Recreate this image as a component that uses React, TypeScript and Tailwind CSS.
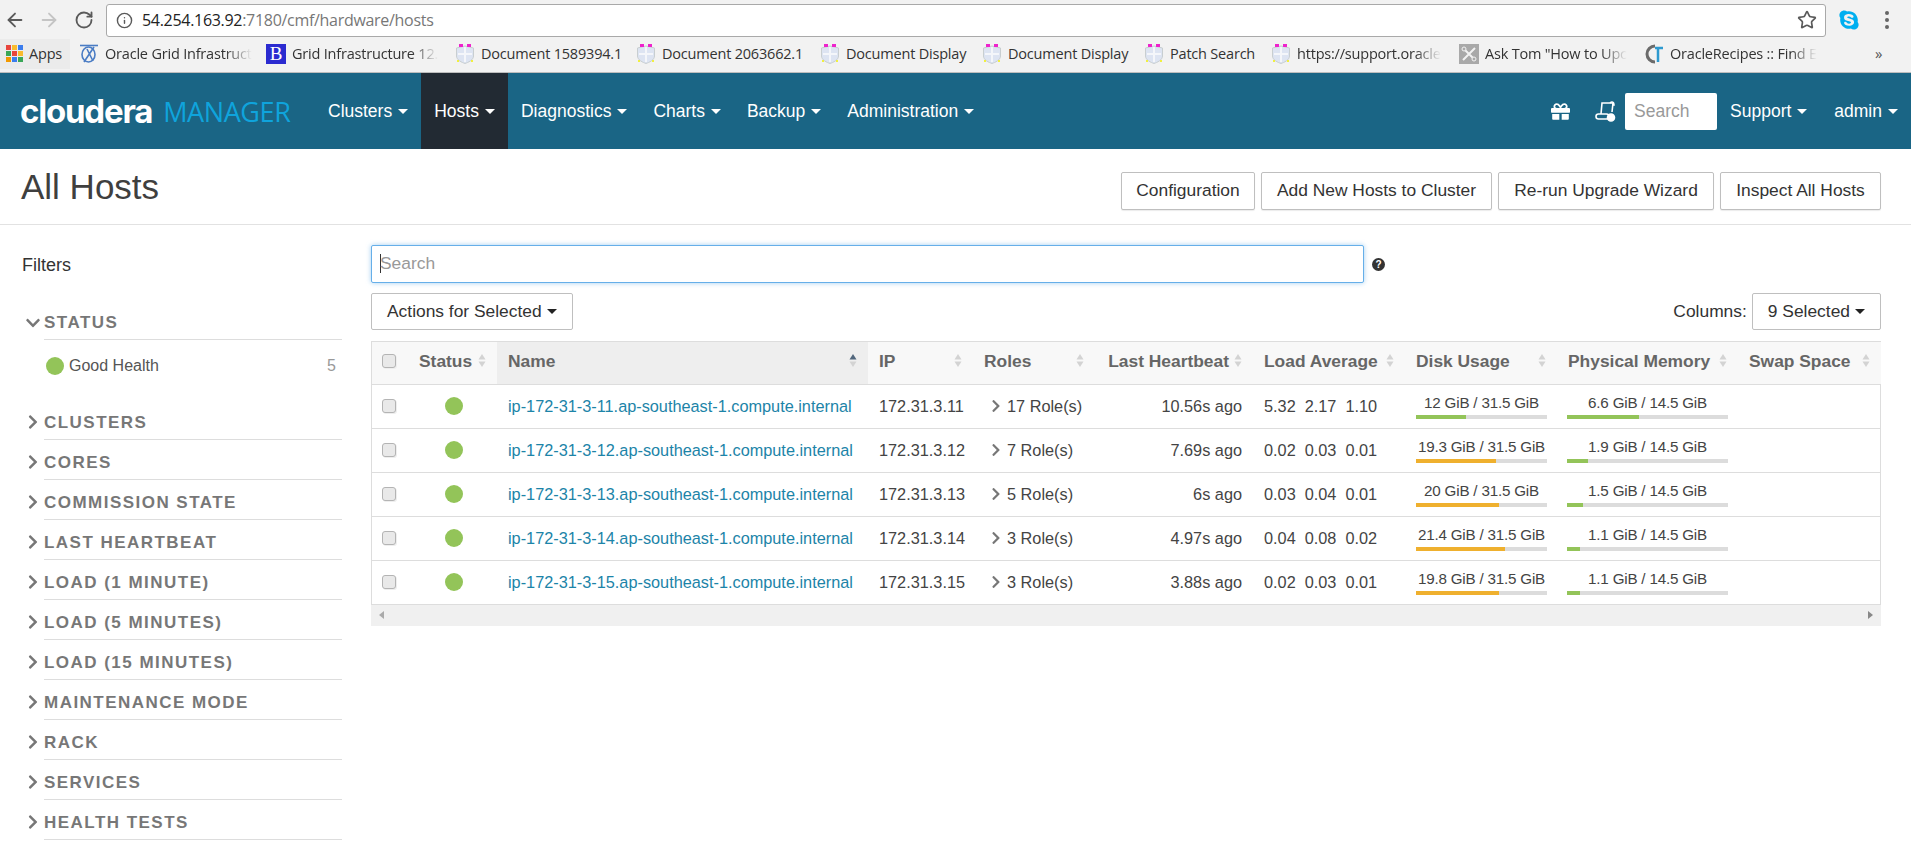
import { ArrowLeft, ArrowRight, Info, RotateCw, Star } from "lucide-react";
import { FaChevronDown, FaChevronRight, FaGift, FaSkype } from "react-icons/fa";

const APP_COLORS = [
  "bg-[#e8453c]", "bg-[#f9bb2d]", "bg-[#3b7ded]",
  "bg-[#3aa757]", "bg-[#e8453c]", "bg-[#f9bb2d]",
  "bg-[#f29900]", "bg-[#3b7ded]", "bg-[#3aa757]",
];

const BOOKMARKS = [
  { kind: "oracle", label: "Oracle Grid Infrastruct", width: "w-[187px]", fade: true },
  { kind: "b", label: "Grid Infrastructure 12.", width: "w-[189px]", fade: true },
  { kind: "shield", label: "Document 1589394.1", width: "w-[181px]", fade: false },
  { kind: "shield", label: "Document 2063662.1", width: "w-[184px]", fade: false },
  { kind: "shield", label: "Document Display", width: "w-[162px]", fade: false },
  { kind: "shield", label: "Document Display", width: "w-[162px]", fade: false },
  { kind: "shield", label: "Patch Search", width: "w-[127px]", fade: false },
  { kind: "shield", label: "https://support.oracle", width: "w-[188px]", fade: true },
  { kind: "cross", label: 'Ask Tom "How to Upc', width: "w-[185px]", fade: true },
  { kind: "recipes", label: "OracleRecipes :: Find E", width: "w-[215px]", fade: true },
];

const NAV_ITEMS = ["Clusters", "Hosts", "Diagnostics", "Charts", "Backup", "Administration"];

const PAGE_ACTIONS = [
  { label: "Configuration", width: "w-[134px]" },
  { label: "Add New Hosts to Cluster", width: "w-[231px]" },
  { label: "Re-run Upgrade Wizard", width: "w-[216px]" },
  { label: "Inspect All Hosts", width: "w-[161px]" },
];

const FILTERS = [
  "CLUSTERS",
  "CORES",
  "COMMISSION STATE",
  "LAST HEARTBEAT",
  "LOAD (1 MINUTE)",
  "LOAD (5 MINUTES)",
  "LOAD (15 MINUTES)",
  "MAINTENANCE MODE",
  "RACK",
  "SERVICES",
  "HEALTH TESTS",
];

const HOSTS = [
  { id: 11, roles: 17, beat: "10.56s ago", load: ["5.32", "2.17", "1.10"], disk: "12 GiB / 31.5 GiB", diskPct: 38, mem: "6.6 GiB / 14.5 GiB", memPct: 45 },
  { id: 12, roles: 7, beat: "7.69s ago", load: ["0.02", "0.03", "0.01"], disk: "19.3 GiB / 31.5 GiB", diskPct: 61, mem: "1.9 GiB / 14.5 GiB", memPct: 13 },
  { id: 13, roles: 5, beat: "6s ago", load: ["0.03", "0.04", "0.01"], disk: "20 GiB / 31.5 GiB", diskPct: 63, mem: "1.5 GiB / 14.5 GiB", memPct: 10 },
  { id: 14, roles: 3, beat: "4.97s ago", load: ["0.04", "0.08", "0.02"], disk: "21.4 GiB / 31.5 GiB", diskPct: 68, mem: "1.1 GiB / 14.5 GiB", memPct: 8 },
  { id: 15, roles: 3, beat: "3.88s ago", load: ["0.02", "0.03", "0.01"], disk: "19.8 GiB / 31.5 GiB", diskPct: 63, mem: "1.1 GiB / 14.5 GiB", memPct: 8 },
];

function Caret({ className }: { className: string }) {
  return <span className={`inline-block h-0 w-0 border-x-[5px] border-t-[5px] border-x-transparent ${className}`} />;
}

function SortIcon({ active = false }: { active?: boolean }) {
  return (
    <svg width="8" height="15" viewBox="0 0 8 15" className="shrink-0">
      <path d="M4 1 L7.5 6.5 H0.5 Z" fill={active ? "#52677d" : "#d3d3d3"} />
      <path d="M4 14 L7.5 8.5 H0.5 Z" fill="#d3d3d3" />
    </svg>
  );
}

function Favicon({ kind }: { kind: string }) {
  if (kind === "b") {
    return (
      <span className="flex h-[20px] w-[20px] shrink-0 items-center justify-center bg-[#2b2bd0] font-['Liberation_Serif',serif] text-[19px] leading-none text-white">
        B
      </span>
    );
  }
  return (
    <svg width="20" height="20" viewBox="0 0 20 20" className="shrink-0">
      {kind === "oracle" ? (
        <g fill="none" stroke="#4a7cc4" strokeWidth="1.6">
          <path d="M1 1.5 H19" />
          <ellipse cx="9.5" cy="10.5" rx="6.5" ry="7.5" />
          <path d="M5 18 L15 3 M8 5 L14 17" />
        </g>
      ) : null}
      {kind === "shield" ? (
        <g>
          <path d="M1.5 4 L10 2 L18.5 4 V12 C18.5 16 13 18.5 10 19.5 C7 18.5 1.5 16 1.5 12 Z" fill="#dde4f2" stroke="#c8ced0" />
          <path d="M10 3 V18 M3 10 H17" stroke="#f4f6fa" strokeWidth="2" />
          <rect x="4" y="0" width="4" height="3" fill="#ee22cc" />
          <rect x="12" y="0" width="4" height="3" fill="#ee22cc" />
          <rect x="2" y="16" width="2" height="2" fill="#f0f040" />
          <rect x="16" y="16" width="2" height="2" fill="#f0f040" />
        </g>
      ) : null}
      {kind === "cross" ? (
        <g>
          <rect x="0" y="0" width="20" height="20" fill="#a9a9a9" />
          <path d="M4 4 L16 16 M16 4 L4 16" stroke="#f2f2f2" strokeWidth="2" />
          <circle cx="5" cy="5" r="2" fill="#a9a9a9" stroke="#f2f2f2" />
          <circle cx="15" cy="15" r="2" fill="#a9a9a9" stroke="#f2f2f2" />
        </g>
      ) : null}
      {kind === "recipes" ? (
        <g fill="none">
          <path d="M11 2 A8 8 0 1 0 11 18" stroke="#6b6b6b" strokeWidth="3" />
          <path d="M11 4 H19 M14 4 V18" stroke="#2e9ad0" strokeWidth="2.5" />
        </g>
      ) : null}
    </svg>
  );
}

function Checkbox() {
  return <span className="block h-[14px] w-[14px] rounded-[3px] border border-[#b4b4b4] bg-[#e9e9e9] shadow-[1px_1px_0_#eeeeee]" />;
}

function HeaderCell({
  label,
  width,
  active = false,
  right = false,
}: {
  label: string;
  width: string;
  active?: boolean;
  right?: boolean;
}) {
  return (
    <th className={`${width} h-[42px] border-b border-[#dddddd] px-[11px] pb-[4px] font-bold ${active ? "bg-[#eeeeee]" : ""}`}>
      <div className={`flex items-center gap-[5px] ${right ? "justify-end" : "justify-between"}`}>
        <span className="whitespace-nowrap">{label}</span>
        <SortIcon active={active} />
      </div>
    </th>
  );
}

function UsageBar({ label, percent, color }: { label: string; percent: number; color: string }) {
  return (
    <div className="w-full">
      <div className="text-center text-[15.2px] leading-[18px] tracking-[-0.2px] whitespace-nowrap">{label}</div>
      <div className="mt-[3px] h-[4px] w-full bg-[#dcdcdc]">
        <div className={`h-full ${color}`} style={{ width: `${percent}%` }} />
      </div>
    </div>
  );
}

export default function App() {
  return (
    <div className="h-[854px] w-[1911px] overflow-hidden bg-white font-['Liberation_Sans',Arial,sans-serif] text-[17.4px] text-[#333333]">
      {/* browser toolbar */}
      <div className="flex h-[38px] items-center bg-[#f2f2f2] pt-[2px]">
        <div className="flex w-[106px] items-center pl-[4px] text-[#5a5a5a]">
          <ArrowLeft size={22} strokeWidth={2} />
          <ArrowRight size={22} strokeWidth={2} className="ml-[12px] text-[#c4c4c4]" />
          <RotateCw size={20} strokeWidth={2.2} className="ml-[14px]" />
        </div>
        <div className="flex h-[33px] w-[1720px] items-center rounded-[3px] border border-[#a9a9a9] bg-white pr-[8px] pl-[9px]">
          <Info size={17} strokeWidth={2} className="text-[#5a5a5a]" />
          <span className="ml-[9px] font-['Open_Sans',sans-serif] text-[16px] tracking-[-0.3px] text-[#222222]">54.254.163.92</span>
          <span className="font-['Open_Sans',sans-serif] text-[16px] tracking-[-0.3px] text-[#777777]">:7180/cmf/hardware/hosts</span>
          <Star size={20} strokeWidth={2} className="ml-auto text-[#5a5a5a]" />
        </div>
        <FaSkype size={22} className="ml-[12px] text-[#00aff0]" />
        <div className="ml-[25px] flex flex-col gap-[3px]">
          <span className="h-[4px] w-[4px] rounded-full bg-[#666666]" />
          <span className="h-[4px] w-[4px] rounded-full bg-[#666666]" />
          <span className="h-[4px] w-[4px] rounded-full bg-[#666666]" />
        </div>
      </div>

      {/* bookmarks bar */}
      <div className="flex h-[35px] items-center border-b border-[#bdbdbd] bg-[#f2f2f2] pb-[3px] font-['Open_Sans',sans-serif] text-[14.5px] tracking-[-0.2px] text-[#333333]">
        <div className="flex h-[30px] w-[70px] items-center bg-[#ebebeb] pl-[6px]">
          <div className="grid grid-cols-3 gap-[1px]">
            {APP_COLORS.map((color, index) => (
              <span className={`h-[5px] w-[5px] ${color}`} key={index} />
            ))}
          </div>
          <span className="ml-[6px]">Apps</span>
        </div>
        <div className="ml-[9px] flex">
          {BOOKMARKS.map((bookmark, index) => (
            <div className={`flex items-center gap-[6px] ${bookmark.width}`} key={index}>
              <Favicon kind={bookmark.kind} />
              <span
                className={`whitespace-nowrap ${
                  bookmark.fade ? "[mask-image:linear-gradient(to_right,black_82%,transparent)]" : ""
                }`}
              >
                {bookmark.label}
              </span>
            </div>
          ))}
        </div>
        <span className="ml-[16px] text-[15px] text-[#555555]">»</span>
      </div>

      {/* manager nav */}
      <nav className="flex h-[76px] items-stretch bg-[#1a6585] text-[17.5px] text-white">
        <div className="flex w-[315px] items-center pl-[20px]">
          <span className="font-['Inter',sans-serif] text-[33px] leading-none font-bold tracking-[-1.2px]">cloudera</span>
          <span className="ml-[11px] font-['Open_Sans',sans-serif] text-[27px] leading-none font-normal tracking-[-0.4px] text-[#0fa4dc]">MANAGER</span>
        </div>
        {NAV_ITEMS.map((item) => (
          <div className={`flex items-center gap-[6px] px-[13px] ${item === "Hosts" ? "bg-[#222a33]" : ""}`} key={item}>
            <span>{item}</span>
            <Caret className="border-t-white" />
          </div>
        ))}
        <div className="ml-auto flex items-center pr-[13px]">
          <FaGift size={19} />
          <svg width="22" height="22" viewBox="0 0 22 22" className="ml-[24px]" fill="none" stroke="white" strokeWidth="1.6">
            <path d="M7 14 L8 3 H19 L18 12" />
            <path d="M16 3 C18 1 20 2 20 5 H18" />
            <rect x="2" y="14" width="13" height="5" rx="2.5" />
            <circle cx="17" cy="17.5" r="3.5" fill="white" />
          </svg>
          <div className="ml-[9px] flex h-[37px] w-[92px] items-center rounded-[2px] bg-white pl-[9px] text-[#999999]">Search</div>
          <span className="ml-[13px]">Support</span>
          <Caret className="ml-[6px] border-t-white" />
          <span className="ml-[27px]">admin</span>
          <Caret className="ml-[6px] border-t-white" />
        </div>
      </nav>

      {/* page title */}
      <div className="flex h-[76px] items-center border-b border-[#e2e2e2] pr-[30px] pl-[21px]">
        <h1 className="text-[35px] leading-none text-[#3f3f3f]">All Hosts</h1>
        <div className="mt-[8px] ml-auto flex gap-[6px]">
          {PAGE_ACTIONS.map((action) => (
            <button
              className={`h-[38px] rounded-[2px] border border-[#bfbfbf] bg-white whitespace-nowrap text-[#333333] shadow-[0_1px_1px_rgba(0,0,0,0.08)] ${action.width}`}
              key={action.label}
            >
              {action.label}
            </button>
          ))}
        </div>
      </div>

      <div className="flex">
        {/* filters */}
        <aside className="w-[371px] shrink-0 pt-[28px] pl-[22px]">
          <h2 className="text-[18px] leading-[24px] text-[#333333]">Filters</h2>
          <div className="mt-[30px] ml-[3px] flex h-[32px] items-center">
            <span className="flex w-[19px] shrink-0 items-center text-[#777777]">
              <FaChevronDown size={16} />
            </span>
            <span className="text-[17px] font-bold tracking-[1.47px] text-[#777777]">STATUS</span>
          </div>
          <div className="ml-[22px] w-[298px] border-t border-[#dddddd]" />
          <div className="mt-[14px] ml-[24px] flex w-[290px] items-center text-[16px] text-[#555555]">
            <span className="h-[18px] w-[18px] rounded-full bg-[#93c459]" />
            <span className="ml-[5px]">Good Health</span>
            <span className="ml-auto text-[#999999]">5</span>
          </div>
          <div className="mt-[22px]">
            {FILTERS.map((filter) => (
              <div className="ml-[3px] flex h-[40px] items-center" key={filter}>
                <span className="flex w-[19px] shrink-0 items-center pt-[4px] text-[#777777]">
                  <FaChevronRight size={16} />
                </span>
                <div className="flex h-full w-[298px] items-center border-b border-[#dddddd] pt-[6px] text-[17px] font-bold tracking-[1.47px] whitespace-nowrap text-[#777777]">
                  {filter}
                </div>
              </div>
            ))}
          </div>
        </aside>

        {/* hosts */}
        <main className="w-[1510px] shrink-0 pt-[20px]">
          <div className="flex items-center">
            <div className="flex h-[38px] w-[993px] items-center rounded-[2px] border border-[#66afe9] bg-white pb-[2px] pl-[8px] text-[#999999] shadow-[0_0_5px_rgba(102,175,233,0.6)]">
              <span className="mr-[-1px] h-[19px] w-px bg-[#333333]" />
              Search
            </div>
            <span className="ml-[8px] flex h-[13px] w-[13px] items-center justify-center rounded-full bg-[#333333] text-[10px] font-bold text-white">?</span>
          </div>
          <div className="mt-[10px] flex items-center">
            <button className="flex h-[37px] items-center gap-[5px] rounded-[2px] border border-[#bfbfbf] bg-white px-[15px] whitespace-nowrap">
              Actions for Selected
              <Caret className="border-t-[#222222]" />
            </button>
            <span className="ml-auto">Columns:</span>
            <button className="ml-[5px] flex h-[37px] items-center gap-[5px] rounded-[2px] border border-[#bfbfbf] bg-white px-[15px] whitespace-nowrap">
              9 Selected
              <Caret className="border-t-[#222222]" />
            </button>
          </div>

          <div className="mt-[11px] border-x border-t border-[#dddddd]">
            <table className="w-full table-fixed border-collapse text-left">
              <thead className="bg-[#f8f8f8] text-[#666666]">
                <tr>
                  <th className="h-[42px] w-[36px] border-b border-[#dddddd] pb-[4px] pl-[10px]">
                    <Checkbox />
                  </th>
                  <HeaderCell label="Status" width="w-[89px]" />
                  <HeaderCell label="Name" width="w-[371px]" active />
                  <HeaderCell label="IP" width="w-[105px]" />
                  <HeaderCell label="Roles" width="w-[122px]" />
                  <HeaderCell label="Last Heartbeat" width="w-[158px]" right />
                  <HeaderCell label="Load Average" width="w-[152px]" />
                  <HeaderCell label="Disk Usage" width="w-[152px]" />
                  <HeaderCell label="Physical Memory" width="w-[181px]" />
                  <HeaderCell label="Swap Space" width="w-[143px]" />
                </tr>
              </thead>
              <tbody className="text-[16.3px] text-[#444444]">
                {HOSTS.map((host) => (
                  <tr className="h-[44px] border-b border-[#dddddd]" key={host.id}>
                    <td className="pl-[10px]">
                      <Checkbox />
                    </td>
                    <td>
                      <span className="mx-auto block h-[18px] w-[18px] translate-x-[1px] rounded-full bg-[#93c459]" />
                    </td>
                    <td className="px-[11px] whitespace-nowrap text-[#1c84a8]">ip-172-31-3-{host.id}.ap-southeast-1.compute.internal</td>
                    <td className="px-[11px]">172.31.3.{host.id}</td>
                    <td className="pr-[11px] pl-[16px]">
                      <div className="flex items-center">
                        <span className="flex w-[18px] shrink-0 items-center text-[#777777]">
                          <FaChevronRight size={14} />
                        </span>
                        {host.roles} Role(s)
                      </div>
                    </td>
                    <td className="px-[11px] text-right whitespace-nowrap">{host.beat}</td>
                    <td className="px-[11px] whitespace-nowrap">{host.load.join("\u00a0\u00a0")}</td>
                    <td className="pr-[10px] pl-[11px]">
                      <UsageBar label={host.disk} percent={host.diskPct} color={host.id === 11 ? "bg-[#93c459]" : "bg-[#efb02e]"} />
                    </td>
                    <td className="px-[10px]">
                      <UsageBar label={host.mem} percent={host.memPct} color="bg-[#93c459]" />
                    </td>
                    <td />
                  </tr>
                ))}
              </tbody>
            </table>
          </div>
          <div className="flex h-[21px] items-center justify-between bg-[#f0f0f0] px-[8px]">
            <span className="h-0 w-0 border-y-[4px] border-r-[5px] border-y-transparent border-r-[#aaaaaa]" />
            <span className="h-0 w-0 border-y-[4px] border-l-[5px] border-y-transparent border-l-[#888888]" />
          </div>
        </main>
      </div>
    </div>
  );
}
